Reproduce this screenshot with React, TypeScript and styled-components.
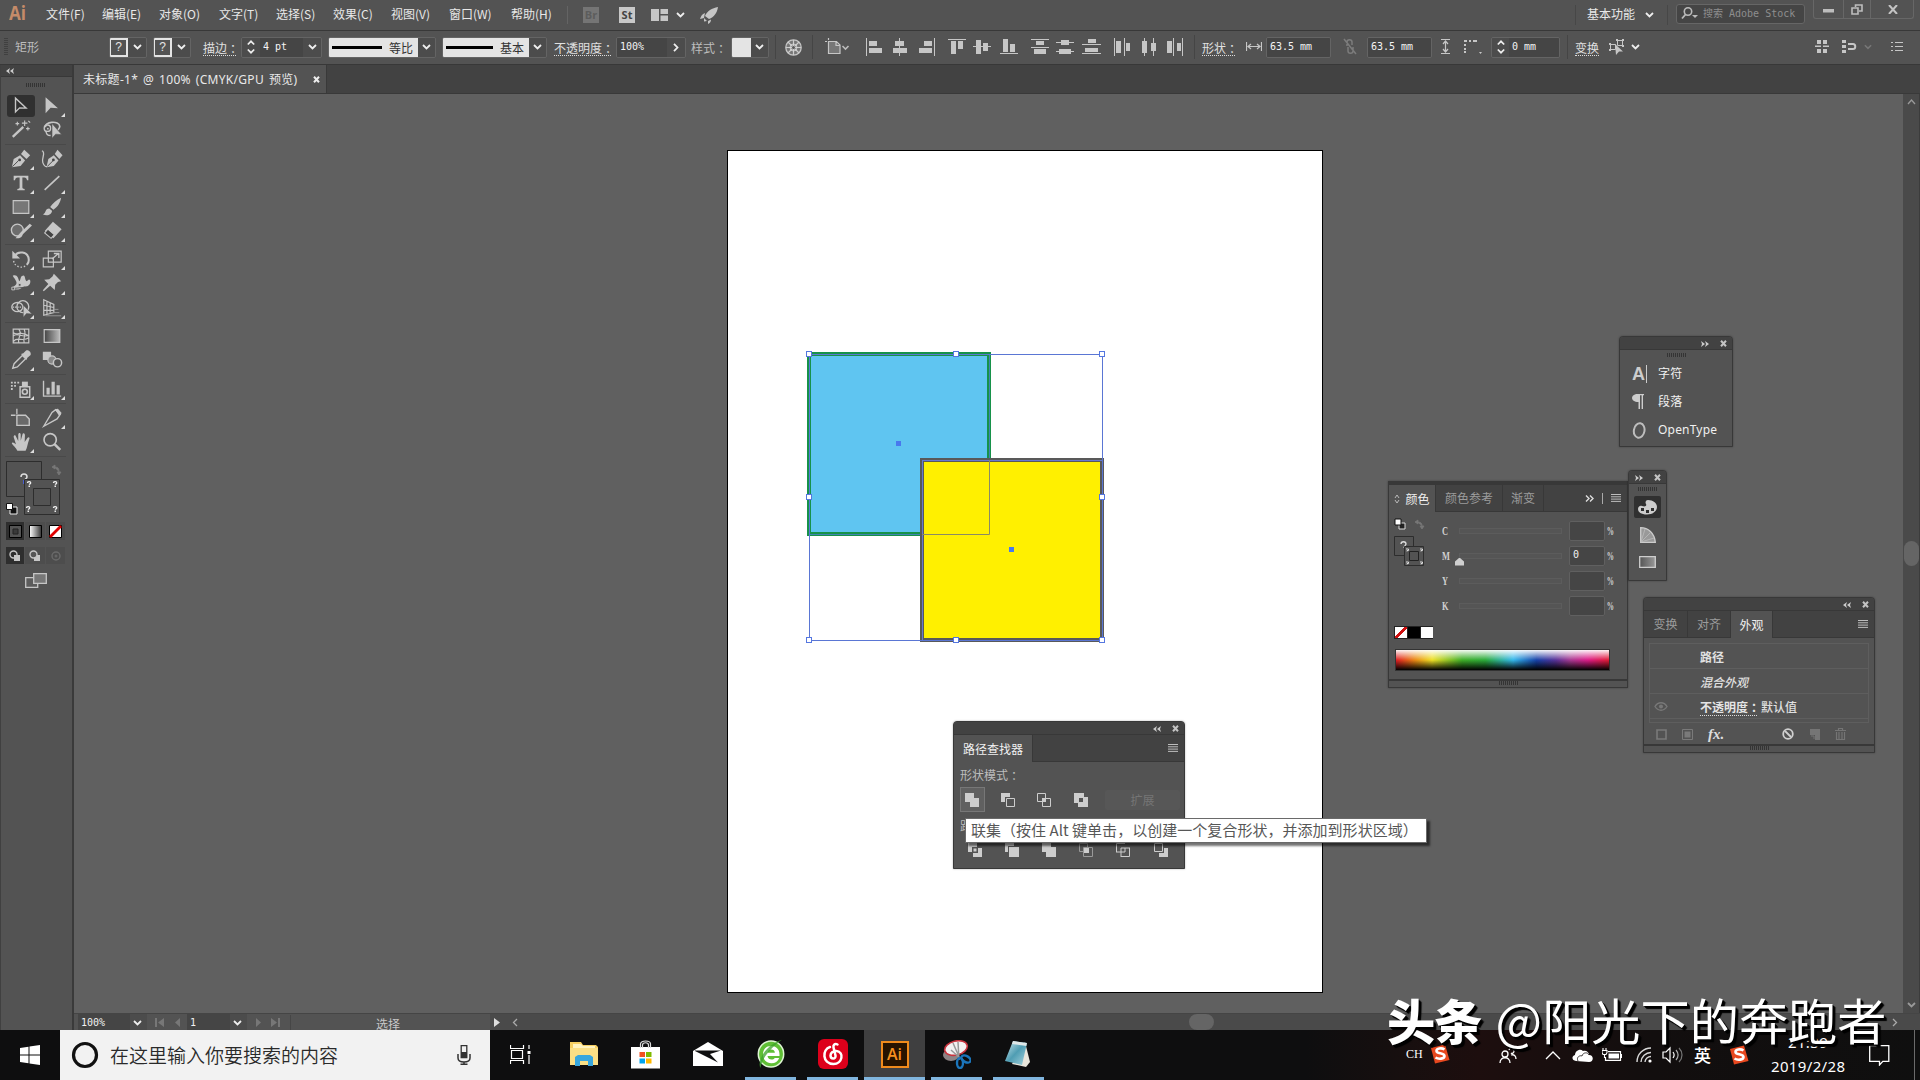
import React from 'react';
import styled, { createGlobalStyle, css } from 'styled-components';

const UI = '"Noto Sans CJK SC", "Noto Sans", sans-serif';
const MONO = '"DejaVu Sans Mono", "Noto Sans CJK SC", monospace';
const C = {
  bar: '#535353', strip: '#424242', canvas: '#606060', line: '#383838',
  field: '#454545', icon: '#c6c6c6', text: '#e6e6e6',
};

const Global = createGlobalStyle`
  *, *::before, *::after { box-sizing: border-box; }
  html, body { margin: 0; padding: 0; background: ${C.bar}; overflow: hidden; }
  svg { display: block; flex: none; }
`;

const Screen = styled.div`
  position: relative; width: 1920px; height: 1080px; overflow: hidden;
  display: grid; grid-template-rows: 31px 34px 965px 50px;
  background: ${C.bar}; color: ${C.text}; font: 12px/16px ${UI}; white-space: nowrap;
`;

/* ---------- shared bits ---------- */
const Cell = styled.div<{ $w: number; $dy?: number }>`
  flex: none; width: ${p => p.$w}px; height: 100%; display: flex; align-items: center;
  padding-top: ${p => p.$dy || 0}px;
`;
const VLine = styled.i<{ $h?: number; $c?: string }>`
  display: block; width: 1px; height: ${p => p.$h || 24}px; background: ${p => p.$c || '#454545'};
`;
const Svg = ({ w, h, vb, children }: { w: number; h: number; vb?: string; children: React.ReactNode }) => (
  <svg width={w} height={h} viewBox={vb || `0 0 ${w} ${h}`} fill="none" stroke="none">{children}</svg>
);
const Chevron = ({ c = '#eee', w = 9 }: { c?: string; w?: number }) => (
  <Svg w={w} h={6} vb="0 0 9 6"><path d="M1 1l3.5 3.5L8 1" stroke={c} strokeWidth="1.8" /></Svg>
);
const DoubleArrow = ({ right }: { right?: boolean }) => (
  <Svg w={8} h={6}>
    <path fill="#ccc" d={right ? 'M0 0l4 3-4 3 1-3zM4 0l4 3-4 3 1-3z' : 'M4 0L0 3l4 3-1-3zM8 0L4 3l4 3-1-3z'} />
  </Svg>
);
const CrossIcon = ({ c = '#c4c4c4' }: { c?: string }) => (
  <Svg w={7} h={7}><path d="M1 .8l5 5.4M6 .8L1 6.2" stroke={c} strokeWidth="2" /></Svg>
);
const MenuLines = () => (
  <Svg w={10} h={8}><path d="M0 .5h10M0 2.8h10M0 5.1h10M0 7.4h10" stroke="#bdbdbd" strokeWidth="1" /></Svg>
);
const Grip = styled.i`
  display: block; width: 19px; height: 4px;
  background: repeating-linear-gradient(90deg, #343434 0 1px, transparent 1px 2px);
`;

/* ---------- menu bar ---------- */
const MenuBar = styled.header`
  display: flex; background: ${C.bar}; border-bottom: 1px solid ${C.line}; padding-left: 9px; height: 31px;
`;
const AiMark = styled.span`
  font: bold 19px/22px "Open Sans", sans-serif; color: #c58b69; transform: scaleX(.9); transform-origin: left; padding-bottom: 4px;
`;
const MenuText = styled.span` font: 12px/16px ${UI}; color: #e8e8e8; padding-bottom: 2px; `;
const AppBadge = styled.span<{ $off?: boolean }>`
  width: 16px; height: 16px; background: ${p => (p.$off ? '#757575' : '#c8c8c8')}; color: ${p => (p.$off ? '#5c5c5c' : '#444')};
  font: bold 11px/16px "Open Sans", sans-serif; text-align: center;
`;
const StockSearch = styled.div`
  width: 129px; height: 20px; margin-bottom: 3px; background: ${C.field}; border: 1px solid #666; border-radius: 3px;
  display: flex; align-items: center; gap: 5px; padding-left: 4px; color: #8e8e8e; font: 10px/14px ${MONO};
`;
const WinButtons = styled.div`
  display: grid; grid-template-columns: 29px 27px 44px; height: 19px; align-self: flex-start;
  border: 1px solid #676767; border-top: 0; border-radius: 0 0 3px 3px; width: 101px;
`;
const WinBtn = styled.span`
  display: grid; place-items: center; border-left: 1px solid #676767; &:first-child { border-left: 0; }
`;

const menus: [string, number][] = [
  ['文件(F)', 56], ['编辑(E)', 57], ['对象(O)', 60], ['文字(T)', 57], ['选择(S)', 57],
  ['效果(C)', 58], ['视图(V)', 58], ['窗口(W)', 62], ['帮助(H)', 56],
];

const Menu = () => (
  <MenuBar>
    <Cell $w={37}><AiMark>Ai</AiMark></Cell>
    {menus.map(([t, w]) => <Cell key={t} $w={w}><MenuText>{t}</MenuText></Cell>)}
    <Cell $w={16}><VLine $h={18} $c="#646464" /></Cell>
    <Cell $w={36}><AppBadge $off>Br</AppBadge></Cell>
    <Cell $w={32}><AppBadge>St</AppBadge></Cell>
    <Cell $w={25}><Svg w={17} h={12}><path fill={C.icon} d="M0 0h8v12H0zM9.500 0H17v5H9.500zM9.500 6.500H17V12H9.500z" /></Svg></Cell>
    <Cell $w={24}><Chevron /></Cell>
    <Cell $w={875}>
      <Svg w={18} h={17}><path fill={C.icon} d="M18 0C12 1 7 4 5 9l4 3c5-2 8-6 9-12zM5 6C2 7 1 9 0 12l4-1zM11 12.500l-3 1.500v3c2-1 3-2.500 3-4.500zM4 11l3 3-3 .5z" /></Svg>
    </Cell>
    <Cell $w={12}><VLine $h={20} $c="#474747" /></Cell>
    <Cell $w={58}><MenuText>基本功能</MenuText></Cell>
    <Cell $w={22}><Chevron /></Cell>
    <Cell $w={9}><VLine $h={20} $c="#474747" /></Cell>
    <Cell $w={137}>
      <StockSearch>
        <Svg w={17} h={13}><circle cx="7" cy="4.500" r="3.700" stroke="#bbb" strokeWidth="1.600" /><path d="M4.500 7.500L1 11.500" stroke="#bbb" strokeWidth="1.800" /><path d="M11 8h6l-3 3z" fill="#bbb" /></Svg>
        搜索 Adobe Stock
      </StockSearch>
    </Cell>
    <WinButtons>
      <WinBtn><Svg w={11} h={8}><path fill="#bdbdbd" d="M0 4h11v3.500H0z" /></Svg></WinBtn>
      <WinBtn><Svg w={12} h={11}><path d="M4.500 3V1h6.500v6H8M1 4h6v6H1z" stroke="#bdbdbd" strokeWidth="1.600" /></Svg></WinBtn>
      <WinBtn><Svg w={10} h={9}><path d="M1 0l8 9M9 0L1 9" stroke="#c4c4c4" strokeWidth="2" /></Svg></WinBtn>
    </WinButtons>
  </MenuBar>
);

/* ---------- control bar ---------- */
const ControlBar = styled.div`
  display: flex; height: 34px; padding: 0 0 2px 4px; background: ${C.bar}; border-bottom: 1px solid ${C.line};
`;
const SideGrip = styled.i`
  display: block; width: 4px; height: 18px; background: repeating-linear-gradient(180deg, #404040 0 1px, transparent 1px 2px);
`;
const Frame = styled.div<{ $w: number }>`
  display: flex; align-items: stretch; width: ${p => p.$w}px; height: 21px; border: 1px solid #646464; border-radius: 2px; overflow: hidden;
`;
const QBox = styled.span`
  width: 19px; margin-left: -1px; border: 2px solid #e4e4e4; color: #e4e4e4; font: 12px/15px "Liberation Sans", sans-serif; text-align: center;
`;
const Drop = styled.span<{ $w?: number }>`
  ${p => (p.$w ? css`width: ${p.$w}px;` : css`flex: 1;`)} display: grid; place-items: center; background: #4c4c4c;
`;
const Field = styled.span`
  flex: 1; background: ${C.field}; color: #f4f4f4; font: 10px/18px ${MONO}; padding-left: 3px;
`;
const White = styled.span<{ $w: number }>`
  width: ${p => p.$w}px; background: #e4e4e4; color: #333; display: flex; align-items: center; justify-content: space-between; padding: 1px 5px 0 3px;
`;
const Rule = styled.i<{ $w: number }>` display: block; width: ${p => p.$w}px; height: 3px; background: #000; `;
const Label = styled.span<{ $u?: boolean; $c?: string }>`
  color: ${p => p.$c || '#e0e0e0'}; line-height: 15px; ${p => p.$u && css`border-bottom: 1px dotted #ddd;`}
`;
const Tight = styled.span` font-feature-settings: "halt"; margin-left: 3px; `;
const Spin = () => (
  <Svg w={8} h={14}><path d="M.8 4.500L4 1.300l3.200 3.200M.8 9.500L4 12.700l3.200-3.200" stroke="#eee" strokeWidth="1.700" /></Svg>
);

type Shape = { r: number[][]; w: number; n: number };
const aligns: Shape[] = [
  { n: 27, w: 16, r: [[0, 0, 1, 18], [3, 3, 8, 5], [3, 10, 13, 5]] },
  { n: 26, w: 14, r: [[6, 0, 1, 18], [2, 3, 9, 5], [0, 10, 14, 5]] },
  { n: 29, w: 16, r: [[15, 0, 1, 18], [5, 3, 8, 5], [0, 10, 13, 5]] },
  { n: 25, w: 18, r: [[0, 1, 18, 1], [3, 3, 5, 13], [10, 3, 5, 8]] },
  { n: 27, w: 18, r: [[0, 8, 18, 1], [3, 2, 5, 14], [10, 5, 5, 8]] },
  { n: 31, w: 18, r: [[0, 15, 18, 1], [3, 1, 5, 13], [10, 6, 5, 8]] },
  { n: 25, w: 18, r: [[0, 1, 18, 1], [5, 3, 8, 4], [0, 9, 18, 1], [3, 11, 12, 5]] },
  { n: 26, w: 18, r: [[0, 4, 18, 1], [5, 2, 8, 5], [0, 13, 18, 1], [3, 11, 12, 5]] },
  { n: 32, w: 19, r: [[0, 6, 19, 1], [6, 1, 8, 4], [0, 15, 19, 1], [3, 10, 13, 4]] },
  { n: 27, w: 17, r: [[0, 0, 1, 18], [2, 3, 5, 12], [10, 0, 1, 18], [12, 5, 4, 8]] },
  { n: 25, w: 17, r: [[3, 0, 1, 18], [1, 3, 5, 12], [12, 0, 1, 18], [10, 5, 5, 8]] },
  { n: 28, w: 17, r: [[7, 0, 1, 18], [1, 3, 5, 12], [16, 0, 1, 18], [11, 5, 4, 8]] },
];

const Controls = () => (
  <ControlBar>
    <Cell $w={11}><SideGrip /></Cell>
    <Cell $w={94}><Label $c="#bdbdbd">矩形</Label></Cell>
    <Cell $w={44} $dy={1}><Frame $w={38}><QBox>?</QBox><Drop><Chevron /></Drop></Frame></Cell>
    <Cell $w={50} $dy={1}><Frame $w={38}><QBox>?</QBox><Drop><Chevron /></Drop></Frame></Cell>
    <Cell $w={38} $dy={2}><Label $u>描边<Tight>：</Tight></Label></Cell>
    <Cell $w={87} $dy={1}><Frame $w={81}><Drop $w={18}><Spin /></Drop><Field>4 pt</Field><Drop $w={18}><Chevron /></Drop></Frame></Cell>
    <Cell $w={114} $dy={1}><Frame $w={108}><White $w={89}><Rule $w={50} />等比</White><Drop><Chevron /></Drop></Frame></Cell>
    <Cell $w={112} $dy={1}><Frame $w={105}><White $w={86}><Rule $w={47} />基本</White><Drop><Chevron /></Drop></Frame></Cell>
    <Cell $w={62} $dy={2}><Label $u>不透明度<Tight>：</Tight></Label></Cell>
    <Cell $w={75} $dy={1}><Frame $w={70}><Field>100%</Field><Drop $w={18}><Svg w={6} h={9}><path d="M1 .8l3.500 3.700L1 8.200" stroke="#eee" strokeWidth="1.800" /></Svg></Drop></Frame></Cell>
    <Cell $w={40} $dy={2}><Label $c="#bdbdbd">样式<Tight>：</Tight></Label></Cell>
    <Cell $w={44} $dy={1}><Frame $w={38}><White $w={19} /><Drop><Chevron /></Drop></Frame></Cell>
    <Cell $w={10}><VLine /></Cell>
    <Cell $w={27} $dy={1}>
      <Svg w={17} h={17}><circle cx="8.500" cy="8.500" r="7.700" fill="#777" stroke="#c6c6c6" strokeWidth="1.300" /><path d="M8.500 1v15M1 8.500h15M3 3l11 11M14 3L3 14" stroke="#ccc" strokeWidth="1.200" /><circle cx="8.500" cy="8.500" r="3.500" stroke="#ddd" strokeWidth=".8" /><circle cx="8.500" cy="8.500" r="1.500" fill="#555" /></Svg>
    </Cell>
    <Cell $w={13}><VLine /></Cell>
    <Cell $w={41} $dy={1}>
      <Svg w={25} h={18}><path d="M4 4h7l4 4v7H4z" fill="#777" /><path d="M3.500 3.500h8l3.500 3.500v8.500H3.500zM0 3.500h2M3.500 0v2M11 4v3.500h4" stroke={C.icon} strokeWidth="1.200" /><path d="M17.500 8l3 3 3-3" stroke="#bbb" strokeWidth="1.600" /></Svg>
    </Cell>
    {aligns.map((a, i) => (
      <Cell key={i} $w={a.n} $dy={1}><Svg w={a.w} h={18}>{a.r.map(([x, y, w, h], k) => <rect key={k} x={x} y={y} width={w} height={h} fill={C.icon} />)}</Svg></Cell>
    ))}
    <Cell $w={8}><VLine /></Cell>
    <Cell $w={44} $dy={2}><Label $u>形状<Tight>：</Tight></Label></Cell>
    <Cell $w={20}><Svg w={16} h={9}><path d="M.5 0v9M15.500 0v9M2 4.500h12M5 2L2 4.500 5 7M11 2l3 2.500L11 7" stroke={C.icon} strokeWidth="1.200" /></Svg></Cell>
    <Cell $w={77} $dy={1}><Frame $w={65}><Field>63.5 mm</Field></Frame></Cell>
    <Cell $w={24}><Svg w={14} h={17}><path d="M4 8V4c0-3 5-3 5 0v3M5 9v4c0 3 5 3 5 0V9M1 1l12 15" stroke="#7c7c7c" strokeWidth="1.500" /></Svg></Cell>
    <Cell $w={74} $dy={1}><Frame $w={65}><Field>63.5 mm</Field></Frame></Cell>
    <Cell $w={23}><Svg w={9} h={15}><path d="M0 .5h9M0 14.500h9M4.500 2v11M2 5l2.500-3L7 5M2 10l2.500 3L7 10" stroke={C.icon} strokeWidth="1.200" /></Svg></Cell>
    <Cell $w={27}><Svg w={18} h={14}><path fill={C.icon} d="M0 0h3v2H0zM5 0h2v2H5zM9 0h4v2H9zM0 4h2v2H0zM0 8h2v2H0zM0 11h2v2H0zM15 12h3l-1.500 2z" /></Svg></Cell>
    <Cell $w={76} $dy={1}><Frame $w={69}><Drop $w={17}><Spin /></Drop><Field>0 mm</Field></Frame></Cell>
    <Cell $w={8}><VLine /></Cell>
    <Cell $w={33} $dy={2}><Label $u>变换</Label></Cell>
    <Cell $w={23}><Svg w={18} h={17}><path d="M9.500 2.500h5v5h-5zM2.500 6.500h5v5h-5z" stroke={C.icon} /><path d="M8 1h2v2H8zM14 1h2v2h-2zM14 7h2v2h-2zM1 5h2v2H1zM1 11h2v2H1zM7 6l8 7.500h-4L8 17z" fill={C.icon} /></Svg></Cell>
    <Cell $w={184}><Chevron /></Cell>
    <Cell $w={27}><Svg w={14} h={13}><path fill={C.icon} d="M2 0h4v4H2zM8 0h4v4H8zM2 9h4v4H2zM8 9h4v4H8zM0 5.500h6v1.500H0zM8 5.500h6v1.500H8z" /></Svg></Cell>
    <Cell $w={22}><Svg w={15} h={14}><path d="M0 0h4v3H0zM0 5h4v3H0zM0 10h4v3H0z" fill={C.icon} /><path d="M6 4h5c3 0 3 5 0 5H6" stroke={C.icon} strokeWidth="2" /></Svg></Cell>
    <Cell $w={27}><Chevron c="#777" w={8} /></Cell>
    <Cell $w={12}><Svg w={12} h={9}><path d="M0 .5h2M4 .5h8M0 4.500h2M4 4.500h8M0 8.500h2M4 8.500h8" stroke={C.icon} strokeWidth="1.200" /></Svg></Cell>
  </ControlBar>
);

/* ---------- left toolbar ---------- */
const Work = styled.main` display: grid; grid-template-columns: 74px 1fr; height: 965px; `;
const Tools = styled.aside` border-left: 1px solid #404040; border-right: 2px solid #3a3a3a; background: ${C.bar}; width: 74px; `;
const ToolsHead = styled.div` height: 12px; background: ${C.strip}; padding: 3px 0 0 5px; border-bottom: 1px solid ${C.line}; `;
const GripRow = styled.div` height: 16px; display: flex; justify-content: center; align-items: center; padding-right: 2px; `;
const ToolGroup = styled.div<{ $rh: number; $pt: number; $pb: number }>`
  display: grid; grid-template-columns: 31px 31px; grid-auto-rows: ${p => p.$rh}px; margin: 0 6px 0 4px;
  padding: ${p => p.$pt}px 0 ${p => p.$pb}px; border-bottom: 1px solid #494949;
`;
const ToolCell = styled.span<{ $on?: boolean; $sub?: boolean }>`
  position: relative; display: grid; place-items: center; border-radius: 3px;
  ${p => p.$on && css`background: #303030; margin: 1px 1px 1px 2px;`}
  ${p => p.$sub && css`&::after { content: ''; position: absolute; right: 2px; bottom: 1px; border: 2px solid transparent; border-right-color: #ddd; border-bottom-color: #ddd; }`}
`;
const I = C.icon;
const tool: Record<string, React.ReactNode> = {
  select: <path d="M6 3.500v15l4.500-4.500 7 .3z" stroke={I} strokeWidth="1.500" />,
  direct: <path d="M5 2.500v17.500l5.500-6 8 .5z" fill={I} />,
  wand: <><path d="M3 19.500L14.500 8.500" stroke={I} strokeWidth="2.600" /><path d="M16 1.500v6M13 4.500h6M8 3v4M6 5h4M19.500 8.500v4M17.500 10.500h4M20 2l2 2" stroke={I} strokeWidth="1.200" /></>,
  lasso: <><path d="M5 9C3 3 20 1 20.500 8c0 2-1 3-2 4" stroke={I} strokeWidth="1.800" /><circle cx="7" cy="10" r="3.500" stroke={I} strokeWidth="1.500" /><circle cx="7.500" cy="10.500" r="1" fill={I} /><path d="M5.500 13c0 4 2 5 5 5" stroke={I} strokeWidth="1.500" /><path d="M12 5v16l4-4.500 6.500 .5z" fill={I} stroke="#535353" strokeWidth=".6" /></>,
  pen: <><path d="M2 21l2-9 7-4 5.500 5.500-5 6z" fill={I} /><path d="M12 6.500l3.500-4.500 6.500 6-4 4z" fill={I} /><path d="M2.500 20.500l7-7" stroke="#444" /><circle cx="10.500" cy="13" r="1.500" fill="#444" /></>,
  curve: <><path d="M6 21l2-9 6-4 5 5.500-5 6z" fill={I} /><path d="M15 6.500l3-4.500 5.500 6-3.500 4z" fill={I} /><path d="M6.500 20.500l7-7" stroke="#444" /><circle cx="13.500" cy="13" r="1.500" fill="#444" /><path d="M1 3c5 2-1 8 1 13 1 3 3 5 5 4" stroke={I} strokeWidth="1.400" /></>,
  type: <path d="M4 4h16v5h-1.500c-.3-2-1-3-3-3h-2v11c0 1 .8 1.500 2.500 1.500V20H8v-1.500c1.700 0 2.500-.5 2.500-1.500V6h-2c-2 0-2.700 1-3 3H4z" fill={I} />,
  line: <path d="M4 19.500L20 4.500" stroke={I} strokeWidth="1.800" />,
  rect: <path d="M3.500 5h17v14h-17z" fill="#777" stroke={I} strokeWidth="1.300" />,
  brush: <path d="M22 2c-5 2-9 6-12 10l3.500 3c5-3 7.500-8 8.500-13zM9 13.500c-5 0-3 5-7 6.500 5 2.500 10 0 10-4z" fill={I} />,
  blob: <><circle cx="8" cy="11" r="6.500" fill="#6c6c6c" stroke={I} strokeWidth="1.500" /><path d="M24 6L14 15.500c-1 3.500-3 4.500-8 4.500l6-7L21.500 4z" fill={I} /></>,
  eraser: <><path d="M13 2l9.500 8-9 10-9.500-8z" fill={I} /><path d="M7.500 10l7 6-3.500 4-7-6z" fill="#444" stroke={I} strokeWidth="1.200" /></>,
  rotate: <><path d="M5 9C8 3 20 3 20.500 13c0 2-1 4-2 5" stroke={I} strokeWidth="2.200" /><path d="M2.500 3v8.500H11z" fill={I} /><path d="M4 14c1 8 12 9 15.500 3" stroke={I} strokeWidth="1.500" strokeDasharray="1.600 2" /></>,
  scale: <><path d="M8 3.500h14v12H8zM2.500 11h11v9.500h-11z" stroke={I} strokeWidth="1.300" /><path d="M12 12l7-6M14 6h5.500v5" stroke={I} strokeWidth="1.400" /></>,
  warp: <><path d="M3 4c5-2 6 3 7 6 2-1 1-6 4-6 3-1 2 5 4 6 2 0 2-3 4-1 1 4-2 7-5 7-3-1-5 3-8 3-3 1-5-2-7 0 1-4 6-4 5-8-1-3-3-5-4-7z" fill={I} /><path d="M3 18L22 16" stroke="#535353" /><path d="M2 16.500h3v3H2z" fill="#535353" stroke={I} /><path d="M9 12.500h3v3H9z" fill="#535353" stroke={I} /></>,
  pin: <path d="M14 2l8 8-3.500 1-3 3-.5 5.500-5-4.500-7 6-1-1 6-7-4.500-4.500 5.500-.5 3.500-3z" fill={I} />,
  builder: <><ellipse cx="8" cy="11" rx="6" ry="5" stroke={I} strokeWidth="1.500" /><ellipse cx="14" cy="10.500" rx="6.500" ry="6.500" stroke={I} strokeWidth="1.500" /><path d="M3 11h11" stroke={I} strokeWidth="1.200" strokeDasharray="1.500 1" /><path d="M14.500 9v13l3.500-4 6 .5z" fill={I} stroke="#535353" strokeWidth=".5" /></>,
  persp: <><path d="M3 3l11 5v9L3 20zM6.500 4.500v14M10 6v12M3 9l11 2.500M3 14.500h11" stroke={I} strokeWidth="1.300" /><path d="M14 13.500h5M5 20.500h17M10 17h10" stroke="#999" /></>,
  mesh: <path d="M3.500 4.500h17v15h-17zM3.500 12c5-5 10 3 17-1M9.500 4.500c5 6-2 9 0 15M15.500 4.500c3 6-2 9 0 15M3.500 8c4 5 8-3 17 4M3.500 18c5-6 10 1 17-4" stroke={I} strokeWidth="1.300" />,
  grad: <path d="M3.500 5h17v14h-17z" fill="url(#tg)" stroke={I} strokeWidth="1.300" />,
  dropper: <><path d="M3 21l1.500-5 9-9 3.500 3.500-9 9z" stroke={I} strokeWidth="1.500" /><path d="M12 5.500l2.500-1 3-3c3-1 6 2 5 5l-3.500 3-1 2.500z" fill={I} /></>,
  blend: <><path d="M2 3h9v9H2z" fill={I} /><circle cx="12" cy="12" r="4.500" fill="#888" stroke={I} strokeWidth="1.300" /><circle cx="18" cy="15" r="4.500" fill="#535353" stroke={I} strokeWidth="1.600" /></>,
  spray: <><path d="M11 9.500h10.500v11.500H11z" stroke={I} strokeWidth="1.600" /><path d="M13 4h6.500v5H13z" fill={I} /><circle cx="16.200" cy="15" r="2.700" stroke={I} strokeWidth="1.800" /><path d="M1 4h2v2H1zM4.500 4h2v2h-2zM8 4h2v2H8zM1 7.500h2v2H1zM4.500 7.500h2v2h-2zM1 11h2v2H1z" fill={I} /></>,
  graph: <path d="M2 3h1.500v16H22v1.500H2zM6 10.500h3.500V18H6zM11.500 4H15v14h-3.500zM17 8h3.500v10H17z" fill={I} />,
  artb: <><path d="M7.500 9h9.500l4 4v7H7.500z" fill="#6a6a6a" stroke={I} strokeWidth="1.500" /><path d="M1 9h5M7.500 2v5.500" stroke={I} strokeWidth="1.400" /></>,
  slice: <><path d="M3 21l9-15 4-3 5 5-3.500 5z" stroke={I} strokeWidth="1.500" /><path d="M15 2.500l3.500-.5 4 4.500-2.500 3.500z" fill={I} /></>,
  hand: <path d="M8 21.500c-1-3-5-6-6-8 0-2 2.500-1 4.500 1L4 6.500C4 4 6 4 6.500 6L9 11V4c0-2.500 2.700-2.500 2.700 0v6.500L13.500 4c.5-2.500 2.800-2 2.800.5L16 12l3-4.500c1.200-1.500 3-.5 2 1.500-2 5-2 9-4 12.500z" fill={I} />,
  zoom: <><circle cx="10" cy="9.500" r="6.700" stroke={I} strokeWidth="1.800" /><path d="M15 14.500l6 6" stroke={I} strokeWidth="2.800" /></>,
};
const groups: { rh: number; pt: number; pb: number; items: string[] }[] = [
  { rh: 24.5, pt: 0.5, pb: 1, items: ['select*', 'direct.', 'wand', 'lasso'] },
  { rh: 24, pt: 2, pb: 1, items: ['pen.', 'curve', 'type.', 'line.', 'rect.', 'brush.', 'blob.', 'eraser.'] },
  { rh: 24.5, pt: 2, pb: 2, items: ['rotate.', 'scale.', 'warp.', 'pin.', 'builder.', 'persp.'] },
  { rh: 24, pt: 1, pb: 2, items: ['mesh', 'grad', 'dropper.', 'blend'] },
  { rh: 24, pt: 2, pb: 2, items: ['spray.', 'graph.'] },
  { rh: 24, pt: 2, pb: 2, items: ['artb', 'slice.', 'hand.', 'zoom'] },
];
const FillArea = styled.div` display: flex; padding: 4px 0 0 5px; height: 64px; `;
const ModeRow = styled.div<{ $h: number; $mt: number }>`
  display: grid; grid-template-columns: 18px 20px 19px; height: ${p => p.$h}px; margin: ${p => p.$mt}px 0 0 5px; gap: 1px;
`;
const Mode = styled.span<{ $on?: boolean }>` display: grid; place-items: center; background: ${p => (p.$on ? '#2e2e2e' : '#4d4d4d')}; `;
const ScreenMode = styled.div` display: flex; justify-content: center; margin: 9px 1px 0 0; `;

const Toolbar = () => (
  <Tools>
    <ToolsHead><DoubleArrow /></ToolsHead>
    <GripRow><Grip /></GripRow>
    {groups.map((g, i) => (
      <ToolGroup key={i} $rh={g.rh} $pt={g.pt} $pb={g.pb}>
        {g.items.map(n => (
          <ToolCell key={n} $on={n.endsWith('*')} $sub={n.endsWith('.')}>
            <Svg w={22} h={22} vb="0 0 24 24">
              <defs><linearGradient id="tg"><stop offset="0" stopColor="#444" /><stop offset="1" stopColor="#bbb" /></linearGradient></defs>
              {tool[n.replace(/[*.]/, '')]}
            </Svg>
          </ToolCell>
        ))}
      </ToolGroup>
    ))}
    <FillArea>
      <Svg w={56} h={54}>
        <path d="M.5.5h35v35H.5z" fill="#535353" stroke="#2d2d2d" />
        <path d="M15 16c0-4 6-4 6 0 0 2-3 2-3 5" stroke="#ddd" strokeWidth="1.500" /><path d="M17.500 19v4" stroke="#4a5fd0" />
        <path d="M18.500 18.500h35v35h-35z" fill="#535353" stroke="#2d2d2d" />
        <path d="M27.500 27.500h17v17h-17z" stroke="#2d2d2d" />
        {[[23, 22], [49, 22], [22, 47], [49, 47]].map(([x, y]) => <g key={`${x}-${y}`}><path d={`M${x - 1.5} ${y}c0-2 4-2 3 .5l-1.500 1`} stroke="#eee" strokeWidth="1.300" /><path d={`M${x - 0.5} ${y + 2.5}h1.500v1.500h-1.500z`} fill="#eee" /></g>)}
        <path d="M46 6l3-2v4zM48 6c4 0 5 1 5 5M51 11h4l-2 3z" stroke="#777" fill="#777" strokeWidth=".8" />
      </Svg>
    </FillArea>
    <ModeRow $h={0} $mt={-18}>
      <Svg w={12} h={12}><path d="M4 4h7v7H4z" fill="#111" stroke="#eee" /><path d="M.5.5h6v6h-6z" fill="#fff" stroke="#111" /></Svg>
    </ModeRow>
    <ModeRow $h={18} $mt={19}>
      <Mode $on><Svg w={13} h={13}><path d="M.5.5h12v12H.5z" fill="#555" stroke="#000" /><path d="M4 4h5v5H4z" fill="#3a3a3a" stroke="#222" /></Svg></Mode>
      <Mode><Svg w={13} h={13}><defs><linearGradient id="mg"><stop offset="0" stopColor="#fff" /><stop offset="1" stopColor="#333" /></linearGradient></defs><path d="M.5.5h12v12H.5z" fill="url(#mg)" stroke="#000" /></Svg></Mode>
      <Mode><Svg w={13} h={13}><path d="M.5.500h12v12H.5z" fill="#fff" stroke="#000" /><path d="M1 12L12 1" stroke="#e00000" strokeWidth="2.800" /></Svg></Mode>
    </ModeRow>
    <ModeRow $h={17} $mt={7}>
      <Mode $on><Svg w={12} h={12}><circle cx="4.500" cy="4.500" r="3.500" stroke={I} strokeWidth="1.400" /><path d="M5 5h6v6H5z" fill={I} /></Svg></Mode>
      <Mode><Svg w={12} h={12}><path d="M5 5h6v6H5z" fill={I} /><circle cx="4.500" cy="4.500" r="3.500" fill="#555" stroke={I} strokeWidth="1.400" /></Svg></Mode>
      <Mode><Svg w={12} h={12}><circle cx="6" cy="6" r="4" stroke="#6a6a6a" strokeWidth="1.400" /><circle cx="6" cy="6" r="1.500" fill="#666" /></Svg></Mode>
    </ModeRow>
    <ScreenMode><Svg w={22} h={16}><path d="M.7 4.700h12v9.600H.7z" fill="#5c5c5c" stroke={I} strokeWidth="1.300" /><path d="M8.700.7h12.600v9.600H8.700z" fill="#777" stroke={I} strokeWidth="1.300" /></Svg></ScreenMode>
  </Tools>
);

/* ---------- document ---------- */
const Doc = styled.section` display: grid; grid-template-rows: 29px 919px 17px; min-width: 0; `;
const Tabs = styled.div` display: flex; background: ${C.strip}; border-bottom: 1px solid #393939; `;
const DocTab = styled.div`
  width: 253px; background: ${C.bar}; display: flex; align-items: center; padding: 1px 6px 0 9px; justify-content: space-between;
  border-right: 1px solid #393939; color: #e8e8e8; font: 12px/16px "Noto Sans", ${UI}; letter-spacing: .3px; word-spacing: 1.500px;
`;
const CanvasRow = styled.div` display: grid; grid-template-columns: 1829px 17px; `;
const Pasteboard = styled.div` position: relative; background: ${C.canvas}; overflow: hidden; `;
const Artboard = styled.div`
  position: absolute; left: 653px; top: 56px; width: 596px; height: 843px; background: #fff; border: 1px solid #000;
`;
const Sheet = styled.svg` position: absolute; left: 0; top: 0; `;
const VScroll = styled.div`
  background: #4a4a4a; display: flex; flex-direction: column; align-items: center; justify-content: space-between; padding: 5px 1px; border-right: 1px solid #3c3c3c;
`;
const Thumb = styled.i<{ $w: number; $h: number }>`
  display: block; width: ${p => p.$w}px; height: ${p => p.$h}px; border-radius: 9px; background: #656565;
`;
const Status = styled.div` display: flex; background: #4a4a4a; border-top: 1px solid #454545; height: 17px; `;
const StatusLeft = styled.div` display: flex; width: 416px; background: ${C.bar}; padding-left: 4px; `;
const SField = styled.span<{ $w: number }>`
  width: ${p => p.$w}px; height: 100%; background: ${C.field}; color: #f2f2f2; font: 10px/17px ${MONO}; padding-left: 3px;
`;
const SDrop = styled.span` width: 17px; height: 100%; display: grid; place-items: center; background: #4c4c4c; padding: 2px 3px 0 0; `;

const Canvas = () => {
  const handles = [[735, 260], [882, 260], [1028, 260], [735, 403], [1028, 403], [735, 546], [882, 546], [1028, 546]];
  return (
    <Pasteboard>
      <Artboard />
      <Sheet width={1829} height={919} fill="none">
        <rect x="735" y="260" width="180" height="180" fill="#5fc5f1" stroke="#17924a" strokeWidth="4" />
        <rect x="735.500" y="260.500" width="180" height="180" stroke="#3f83b4" />
        <rect x="848" y="366" width="180" height="180" fill="#fff000" stroke="#595959" strokeWidth="4" />
        <rect x="848.500" y="366.500" width="180" height="180" stroke="#6878d0" />
        <path d="M915.500 366v74.500H848" stroke="#8a8a66" />
        <rect x="735.500" y="260.500" width="293" height="286" stroke="#5a76d4" />
        <path d="M822 347h5v5h-5zM935 453h5v5h-5z" fill="#4879ee" />
        {handles.map(([x, y]) => <rect key={`${x}.${y}`} x={x - 2.5} y={y - 2.5} width="5" height="5" fill="#fff" stroke="#5577e0" />)}
      </Sheet>
    </Pasteboard>
  );
};

/* ---------- floating panels ---------- */
const Panel = styled.div<{ $x: number; $y: number; $w: number; $h: number; $sq?: boolean }>`
  position: absolute; left: ${p => p.$x}px; top: ${p => p.$y}px; width: ${p => p.$w}px; height: ${p => p.$h}px;
  display: flex; flex-direction: column; background: ${C.bar}; border: 1px solid ${C.line};
  border-radius: ${p => (p.$sq ? '0' : '4px 4px 0 0')}; box-shadow: 0 0 2px rgba(0,0,0,.35); overflow: hidden;
`;
const PHead = styled.div`
  flex: none; height: 13px; background: ${C.strip}; border-bottom: 1px solid ${C.line}; display: flex; align-items: center; justify-content: flex-end; gap: 11px; padding: 1px 5px 0 0;
`;
const TopEdge = styled.div` flex: none; height: 3px; background: #383838; `;
const PTabs = styled.div` flex: none; height: 27px; display: flex; background: ${C.strip}; border-bottom: 1px solid ${C.line}; `;
const PTab = styled.span<{ $w: number; $on?: boolean }>`
  width: ${p => p.$w}px; display: flex; align-items: center; justify-content: center; gap: 5px; border-right: 1px solid ${C.line};
  ${p => (p.$on ? css`background: ${C.bar}; color: #f0f0f0; margin-bottom: -1px;` : css`color: #9c9c9c;`)}
`;
const PTail = styled.span<{ $pr: number }>` flex: 1; display: flex; align-items: center; justify-content: flex-end; gap: 8px; padding-right: ${p => p.$pr}px; `;
const GripFoot = styled.div` flex: none; margin-top: auto; height: 8px; border-top: 2px solid ${C.line}; display: flex; justify-content: center; `;

/* pathfinder */
const PfBody = styled.div` padding: 5px 4px 0 6px; color: #c4c4c4; display: flex; flex-direction: column; align-items: flex-start; `;
const PfRow = styled.div` display: flex; align-items: center; margin-top: 5px; height: 25px; `;
const PfBtn = styled.span<{ $w: number; $on?: boolean }>`
  width: ${p => p.$w}px; height: 25px; display: flex; align-items: center; padding-left: 5px;
  ${p => p.$on && css`background: #606060; outline: 1px solid #777; outline-offset: -1px; margin-right: 11px;`}
`;
const Expand = styled.span` width: 75px; height: 20px; background: #575757; border-radius: 2px; color: #757575; text-align: center; line-height: 20px; `;
const PfRow2 = styled.div` display: flex; margin: 10px 0 0 8px; `;
const PfSub = styled.span` margin-top: 6px; line-height: 15px; color: #bcbcbc; `;
const Tip = styled.div`
  position: absolute; left: 965px; top: 818px; width: 462px; height: 25px; background: #fff; border: 1px solid #6a6a6a; color: #575757;
  font: 15px/22px ${UI}; letter-spacing: .03px; padding-left: 5px; box-shadow: 3px 3px 2px rgba(0,0,0,.55);
`;
const L = '#cdcdcd';
const pf1 = [
  <path key="a" d="M0 0h9v5h5v9H5V9H0z" fill={L} />,
  <g key="b"><path d="M0 0h9v4H4v5H0z" fill={L} /><path d="M5.500 5.500h8v8h-8z" stroke={L} /></g>,
  <g key="c"><path d="M.5.5h8v8h-8zM5.500 5.500h8v8h-8z" stroke={L} /><path d="M5 5h4v4H5z" fill={L} /></g>,
  <path key="d" fillRule="evenodd" d="M0 0h10v4h4v10H4v-4H0zM5 5v4h4V5z" fill={L} />,
];
const pf2 = [
  <g key="a"><path d="M0 0h9v4H4v5H0zM10 5h4v9H5v-4h5z" fill={L} /><path d="M5.500 5.500h3v3h-3z" fill={L} /></g>,
  <g key="b"><path d="M0 0h9v3H3v6H0z" fill={L} /><path d="M4 4h10v10H4z" fill={L} /></g>,
  <path key="c" d="M0 0h9v4h5v10H4V9H0z" fill={L} />,
  <g key="d"><path d="M.5.5h8v8h-8zM4.500 4.500h9v9h-9z" stroke="#999" /><path d="M5 5h5v5H5z" fill={L} /></g>,
  <g key="e"><path d="M.5 9V.5H9M13.500 5v8.500H5M5 5v4h4V5zM9 5h5M5 9v5M0 9h5" stroke={L} /></g>,
  <g key="f"><path d="M.5.500h8v8h-8z" stroke={L} /><path d="M10 5h4v9H5v-4h5z" fill={L} /></g>,
];
const Pathfinder = () => (
  <Panel $x={953} $y={721} $w={232} $h={148}>
    <PHead><DoubleArrow /><CrossIcon /></PHead>
    <PTabs><PTab $w={79} $on>路径查找器</PTab><PTail $pr={6}><MenuLines /></PTail></PTabs>
    <PfBody>
      <Label $c="#bcbcbc">形状模式<Tight>：</Tight></Label>
      <PfRow>
        <PfBtn $w={25} $on><Svg w={14} h={14}>{pf1[0]}</Svg></PfBtn>
        <PfBtn $w={36}><Svg w={14} h={14}>{pf1[1]}</Svg></PfBtn>
        <PfBtn $w={37}><Svg w={14} h={14}>{pf1[2]}</Svg></PfBtn>
        <PfBtn $w={36}><Svg w={14} h={14}>{pf1[3]}</Svg></PfBtn>
        <Expand>扩展</Expand>
      </PfRow>
      <PfSub>路</PfSub>
      <PfRow2>{pf2.map((p, i) => <Cell key={i} $w={i > 3 ? 38 : 37}><Svg w={14} h={14}>{p}</Svg></Cell>)}</PfRow2>
    </PfBody>
  </Panel>
);

/* colour */
const ColorBody = styled.div` display: grid; grid-template-columns: 46px 1fr; padding: 6px 0 0 5px; height: 112px; `;
const Sliders = styled.div` display: grid; grid-auto-rows: 25px; `;
const SliderRow = styled.div` display: grid; grid-template-columns: 19px 103px 7px 36px 14px; align-items: center; color: #d0d0d0; `;
const Track = styled.i` display: block; height: 6px; border: 1px solid #5c5c5c; background: #555; position: relative; `;
const Knob = styled.i`
  position: absolute; left: -5px; top: 4px; width: 9px; height: 8px; background: #cfcfcf; clip-path: polygon(50% 0, 100% 50%, 100% 100%, 0 100%, 0 50%);
`;
const NumBox = styled.span` height: 20px; background: ${C.field}; border: 1px solid #606060; border-radius: 2px; color: #f2f2f2; font: 10px/16px ${MONO}; padding-left: 3px; `;
const Narrow = styled.span` font: bold 12px/14px "Liberation Serif", serif; transform: scaleX(.6); transform-origin: left; padding-left: 3px; `;
const Letter = styled.span` font: bold 12px/14px "Liberation Serif", serif; transform: scaleX(.7); transform-origin: 0; padding-left: 3px; `;
const Swatches = styled.div` display: grid; grid-template-columns: repeat(3, 13px); width: 39px; height: 13px; margin: 2px 0 0 5px; `;
const Sw = styled.i<{ $b: string }>` display: block; background: ${p => p.$b}; border: 1px solid #222; border-right: 0; `;
const Spectrum = styled.div`
  width: 215px; height: 22px; margin: 10px 0 0 6px; border: 1px solid #333;
  background: linear-gradient(180deg, rgba(255,255,255,.95) 0, rgba(255,255,255,0) 50%, rgba(0,0,0,0) 50%, #000 100%),
    linear-gradient(90deg, #e01c24, #ea8a14 9%, #eee026 17%, #3fae28 31%, #2cab3c 42%, #35b8ec 55%, #1742a8 66%, #5a3398 75%, #a83a92 82%, #dc1c88 90%, #e01c34);
`;
const ColorPanel = () => (
  <Panel $x={1388} $y={481} $w={240} $h={207} $sq>
    <TopEdge />
    <PTabs>
      <PTab $w={47} $on><Svg w={6} h={10}><path d="M1 4l2-3 2 3M1 6l2 3 2-3" stroke="#bbb" /></Svg>颜色</PTab>
      <PTab $w={67}>颜色参考</PTab><PTab $w={41}>渐变</PTab>
      <PTail $pr={6}><Svg w={9} h={7}><path d="M1 .5l3 3-3 3M5 .5l3 3-3 3" stroke="#ddd" strokeWidth="1.400" /></Svg><VLine $h={11} $c="#aaa" /><MenuLines /></PTail>
    </PTabs>
    <ColorBody>
      <Svg w={34} h={50}>
        <path d="M5 5h6v6H5z" fill="#222" stroke="#ddd" /><path d="M1 1h6v6H1z" fill="#fff" stroke="#111" />
        <path d="M21 4l3-2v4zM23 4c4 0 5 1 5 4M26 8h4l-2 3z" stroke="#777" fill="#777" strokeWidth=".8" />
        <path d="M.5 18.500h19v19H.5z" stroke="#2d2d2d" /><path d="M7 26c0-3 5-3 5 0 0 1-2 2-2 4" stroke="#ddd" strokeWidth="1.300" />
        <path d="M10.500 28.500h19v19h-19z" fill="#535353" stroke="#2d2d2d" /><path d="M15.500 33.500h9v9h-9z" stroke="#222" />
        {[[12, 31], [26, 31], [12, 44], [26, 44]].map(([x, y]) => <path key={`${x}${y}`} d={`M${x} ${y}h2.500v1.500H${x + 1}v1`} stroke="#ddd" />)}
      </Svg>
      <Sliders>
        {['C', 'M', 'Y', 'K'].map(k => (
          <SliderRow key={k}><Letter>{k}</Letter><Track>{k === 'M' && <Knob />}</Track><i /><NumBox>{k === 'M' ? '0' : ''}</NumBox><Narrow>%</Narrow></SliderRow>
        ))}
      </Sliders>
    </ColorBody>
    <Swatches><Sw $b="linear-gradient(135deg,#fff 43%,#d01010 43% 57%,#fff 57%)" /><Sw $b="#000" /><Sw $b="#fff" /></Swatches>
    <Spectrum />
    <GripFoot><Grip /></GripFoot>
  </Panel>
);

/* icon dock */
const DockBody = styled.div` display: flex; flex-direction: column; align-items: center; padding-top: 3px; `;
const DockItem = styled.span<{ $on?: boolean; $h: number }>`
  width: 27px; height: ${p => p.$h}px; display: grid; place-items: center; ${p => p.$on && css`background: #303030; margin-top: 5px; border-radius: 2px;`}
`;
const Dock = () => (
  <Panel $x={1628} $y={470} $w={39} $h={111}>
    <PHead><DoubleArrow right /><CrossIcon /></PHead>
    <DockBody>
      <Grip />
      <DockItem $on $h={22}><Svg w={19} h={15}><path fillRule="evenodd" fill={L} d="M10 0c5 0 9 3 9 7s-4 7.500-10 7.500S0 12 0 9c0-2 2-4 4-3 3 1 5 0 4-2-1-1-.5-4 2-4zM3 8v3h3V8zM8 10v3h3v-3zM13 8v3h3V8z" /></Svg></DockItem>
      <DockItem $h={34}><Svg w={16} h={16}><path d="M.7.700C8 .7 14.500 6 15.300 15.300H.7z" fill="#999" stroke={L} strokeWidth="1.300" /><path d="M1 15L5 2M1 15l9-9M1 15l13-4" stroke="#bbb" strokeWidth=".8" /></Svg></DockItem>
      <DockItem $h={20}><Svg w={17} h={12}><defs><linearGradient id="dg"><stop offset="0" stopColor="#555" /><stop offset="1" stopColor="#999" /></linearGradient></defs><path d="M.7.7h15.600v10.600H.7z" fill="url(#dg)" stroke={L} strokeWidth="1.300" /></Svg></DockItem>
    </DockBody>
  </Panel>
);

/* type dock */
const TypeRows = styled.div` width: 100%; padding-top: 3px; `;
const TypeRow = styled.div` display: grid; grid-template-columns: 26px 1fr; align-items: center; height: 28px; padding-left: 12px; color: #f0f0f0; font: 12px/18px "Noto Sans", ${UI}; letter-spacing: .2px; `;
const Glyph = styled.span<{ $f: string }>` font: ${p => p.$f}; color: ${L}; display: flex; align-items: center; gap: 1px; `;
const TypeDock = () => (
  <Panel $x={1619} $y={336} $w={114} $h={111}>
    <PHead><DoubleArrow right /><CrossIcon /></PHead>
    <DockBody>
      <Grip />
      <TypeRows>
        <TypeRow><Glyph $f={'bold 18px/20px "Liberation Sans", sans-serif'}>A<VLine $h={18} $c="#ccc" /></Glyph>字符</TypeRow>
        <TypeRow><Svg w={13} h={16}><path d="M6 0h6v1.200h-1V15H9.600V1.200H8V15H6.500V8C-2 8-2 0 6 0z" fill={L} /></Svg>段落</TypeRow>
        <TypeRow><Svg w={15} h={17}><ellipse cx="7.200" cy="8.500" rx="5.300" ry="7.300" transform="rotate(10 7.200 8.500)" stroke="#bdbdbd" strokeWidth="2" /></Svg>OpenType</TypeRow>
      </TypeRows>
    </DockBody>
  </Panel>
);

/* appearance */
const List = styled.div` margin: 5px 5px 0 5px; border: 1px solid #5e5e5e; height: 80px; `;
const ListRow = styled.div<{ $i?: boolean }>`
  display: grid; grid-template-columns: 25px 25px 1fr; height: 25px; align-items: center; border-bottom: 1px solid #5e5e5e; color: #e0e0e0;
  font-weight: 700; padding-top: 1px; ${p => p.$i && css`font-style: italic; font-weight: 500;`}
`;
const Value = styled.span` margin-left: 4px; font-weight: 500; `;
const FootIcons = styled.div` display: flex; height: 21px; padding: 1px 0 0 12px; `;
const Fx = styled.span` font: italic bold 15px/16px "Liberation Serif", serif; color: #ddd; `;
const Appearance = () => (
  <Panel $x={1643} $y={597} $w={232} $h={156}>
    <PHead><DoubleArrow /><CrossIcon /></PHead>
    <PTabs><PTab $w={44}>变换</PTab><PTab $w={43}>对齐</PTab><PTab $w={42} $on>外观</PTab><PTail $pr={6}><MenuLines /></PTail></PTabs>
    <List>
      <ListRow><i /><i /><span>路径</span></ListRow>
      <ListRow $i><i /><i /><span>混合外观</span></ListRow>
      <ListRow>
        <Cell $w={24}><Svg w={18} h={9}><path d="M5 4.500c3-5 9-5 12 0-3 5-9 5-12 0z" stroke="#787878" strokeWidth="1.400" /><circle cx="11" cy="4.500" r="2" fill="#787878" /></Svg><Cell $w={6} /><VLine $h={23} $c="#3a3a3a" /></Cell>
        <i /><span><Label $u $c="#e4e4e4">不透明度<Tight>：</Tight></Label><Value>默认值</Value></span>
      </ListRow>
    </List>
    <FootIcons>
      <Cell $w={26}><Svg w={11} h={11}><path d="M1 1h9v9H1z" stroke="#7a7a7a" strokeWidth="1.600" /></Svg></Cell>
      <Cell $w={26}><Svg w={11} h={11}><path d="M.5.5h10v10H.5z" stroke="#7a7a7a" /><path d="M2.500 2.500h6v6h-6z" fill="#7a7a7a" /></Svg></Cell>
      <Cell $w={74}><Fx>fx.</Fx></Cell>
      <Cell $w={28}><Svg w={12} h={12}><circle cx="6" cy="6" r="4.800" stroke="#d0d0d0" strokeWidth="1.800" /><path d="M3 3l6 6" stroke="#d0d0d0" strokeWidth="1.800" /></Svg></Cell>
      <Cell $w={25}><Svg w={10} h={11}><path d="M0 0h10v11H5V6H0z" fill="#757575" /><path d="M1 7h3v3" stroke="#757575" /></Svg></Cell>
      <Cell $w={12}><Svg w={11} h={12}><path d="M0 2.500h11M3.500 2V.5h4V2M1.500 4v7.500h8V4M4 4v7M7 4v7" stroke="#757575" strokeWidth="1.200" /></Svg></Cell>
    </FootIcons>
    <GripFoot><Grip /></GripFoot>
  </Panel>
);

/* ---------- taskbar ---------- */
const Taskbar = styled.footer`
  display: flex; height: 50px; color: #fff;
  background: linear-gradient(90deg, #0e0e0f 0 68%, #170f0f 73%, #1d0e0e 77%, #120e0e 86%, #0f0f0f 100%);
`;
const Start = styled.div` width: 60px; display: grid; place-items: center; `;
const SearchBox = styled.div`
  width: 430px; background: #f2f2f2; color: #3a3a3a; display: flex; align-items: center; padding: 0 19px 0 11px; font: 19px/26px ${UI};
`;
const SearchHint = styled.span` margin-left: 11px; flex: 1; font-weight: 350; color: #2a2a2a; `;
const TaskItem = styled.div<{ $w: number; $run?: boolean; $on?: boolean; $ml?: number }>`
  width: ${p => p.$w}px; margin-left: ${p => p.$ml || 0}px; display: grid; place-items: center; border-bottom: 3px solid ${p => (p.$run ? '#80b5de' : 'transparent')};
  ${p => p.$on && css`background: #3f3f40;`} padding-top: 1px;
`;
const AiTile = styled.span`
  width: 28px; height: 27px; border: 2px solid #ef8a1c; background: #261300; color: #f5901e; font: 600 16px/22px "Open Sans", sans-serif; text-align: center;
`;
const Tray = styled.div` margin-left: 362px; display: flex; `;
const TCell = styled.div<{ $w: number; $up?: number }>` width: ${p => p.$w}px; display: flex; align-items: center; padding-bottom: ${p => p.$up || 0}px; height: 50px; `;
const Lang = styled.span` font: 12px/16px "Liberation Serif", serif; `;
const Ime = styled.span` font: 500 17px/22px ${UI}; color: #fff; `;
const Clock = styled.div` width: 98px; font: 15px/24px "Noto Sans", sans-serif; letter-spacing: .35px; display: flex; flex-direction: column; `;
const Time = styled.span` padding-left: 17px; `;
const Sogou = () => (
  <Svg w={20} h={20}><path d="M1 4L15 0.500 19.500 16 5 19.500z" fill="#e8481f" /><path d="M14.500 5.500c-3-2-8-1-8 1.500 0 3 8 1.500 8 5 0 3-6 3.500-9 1.500" stroke="#fff" strokeWidth="2.600" /></Svg>
);
const Watermark = styled.div`
  position: absolute; left: 1387px; top: 986px; height: 66px; display: flex; align-items: center; color: #fff; font: 49.200px/66px ${UI};
  text-shadow: 3px 3px 1px #000, 2px 2px 0 #000, 1px 1px 0 #111;
`;
const Brand = styled.b` font-weight: 900; font-size: 48.300px; letter-spacing: -1px; margin-right: 14px; `;

const Task = () => (
  <Taskbar>
    <Start><Svg w={20} h={20}><path fill="#fff" d="M0 3l8.500-1.200v7.700H0zM9.500 1.600L20 0v9.500H9.500zM0 10.500h8.500v7.700L0 17zM9.500 10.500H20V20L9.500 18.400z" /></Svg></Start>
    <SearchBox>
      <Svg w={28} h={28}><circle cx="14" cy="14" r="11.500" stroke="#111" strokeWidth="3.200" /></Svg>
      <SearchHint>在这里输入你要搜索的内容</SearchHint>
      <Svg w={14} h={20}><path d="M4.200.7h5.600v12H4.200z" stroke="#333" strokeWidth="1.300" /><path d="M4 7h6v6H4z" fill="#333" /><path d="M1 9v4c0 3 3 4 6 4s6-1 6-4V9M7 17v2M3.500 19.300h7" stroke="#333" strokeWidth="1.500" /></Svg>
    </SearchBox>
    <TaskItem $w={62} $ml={-1}><Svg w={21} h={19}><path d="M.5 0v3.500h13V0M.5 19v-3.500h13V19M1.500 5.500h11v8h-11zM19 0v4M19 10v9" stroke="#fff" strokeWidth="1.200" /><path d="M17.500 6h3v3h-3z" fill="#fff" /></Svg></TaskItem>
    <TaskItem $w={62} $ml={2}><Svg w={28} h={24}><path d="M0 0h11l2 3h13l2 2v18H0z" fill="#f6cf62" /><path d="M3 2h8l2 2h12v5H3z" fill="#fff3c0" /><path d="M0 6h28v17H0z" fill="#fbdf85" /><path d="M5 24v-9l3-2h12l3 2v9h-5v-5h-8v5z" fill="#38a6dd" /></Svg></TaskItem>
    <TaskItem $w={62} $ml={-1}><Svg w={29} h={29}><path d="M0 7h29v21.500H0z" fill="#fff" /><path d="M9.500 8V4c0-4 10-4 10 0v4M11.500 8V5c0-3 6-3 6 0v3" stroke="#ddd" strokeWidth="1.200" /><path d="M8.500 12h5.500v5H8.500z" fill="#f25022" /><path d="M15 12h5.500v5H15z" fill="#7fba00" /><path d="M8.500 18.500h5.500v5H8.500z" fill="#00a4ef" /><path d="M15 18.500h5.500v5H15z" fill="#ffb900" /></Svg></TaskItem>
    <TaskItem $w={62} $ml={1}><Svg w={30} h={24}><path d="M0 9L15 0l15 9v15H0z" fill="#fff" /><path d="M2 8.500h26L17 12l8 8.500L2 9z" fill="#0e0e0f" /></Svg></TaskItem>
    <TaskItem $w={51} $ml={6} $run>
      <Svg w={28} h={30}>
        <ellipse cx="14" cy="15" rx="12.700" ry="13" fill="#5fbf35" stroke="#dff5d4" strokeWidth="1.500" />
        <path fillRule="evenodd" fill="#fff" d="M14 7c5 0 8.500 3 8.500 8.500v1.500H10.500c.3 2.500 2 3.500 4 3.500 1.500 0 2.500-.5 3.200-1.500h4.500c-1.200 3.500-4 5.200-7.800 5.200-5 0-8.400-3.400-8.400-8.600S9.200 7 14 7zm-3.400 6.800h7.300c-.2-2-1.600-3.200-3.600-3.200s-3.400 1.200-3.700 3.200z" />
        <path d="M3.500 29C-.5 23 8 6 25 .8 16 7 5 18 3.500 29z" fill="#3aa22a" opacity=".75" />
      </Svg>
    </TaskItem>
    <TaskItem $w={51} $ml={11} $run><Svg w={30} h={30}><rect width="30" height="30" rx="6" fill="#dd001b" /><path d="M19.500 5.500c-3-1.500-4.500 1-4 3l2 8c.7 4-5 4-5 0 0-3 3-5 6-4.500 8 1 6 13-3 13C4 25 4 10 12 8" stroke="#fff" strokeWidth="2.500" strokeLinecap="round" /></Svg></TaskItem>
    <TaskItem $w={61} $ml={6} $run $on><AiTile>Ai</AiTile></TaskItem>
    <TaskItem $w={51} $ml={6} $run><Svg w={28} h={29}><ellipse cx="8" cy="15" rx="8" ry="6" fill="#8d8385" /><ellipse cx="13" cy="8" rx="11.500" ry="7" transform="rotate(-14 13 8)" fill="#f4f1f2" stroke="#c8343f" strokeWidth="1.600" /><path d="M10 3l7 16M15 2l1 18M8 10l9 8" stroke="#999" strokeWidth="1.500" /><ellipse cx="17" cy="23" rx="3" ry="5" stroke="#1b75bb" strokeWidth="2.400" /><ellipse cx="23" cy="19" rx="5" ry="3" transform="rotate(30 23 19)" stroke="#1b75bb" strokeWidth="2.400" /></Svg></TaskItem>
    <TaskItem $w={51} $ml={11} $run><Svg w={28} h={28}><defs><linearGradient id="np" x1="0" y1="0" x2="1" y2="1"><stop offset="0" stopColor="#cfe8ee" /><stop offset=".5" stopColor="#4f9db3" /><stop offset="1" stopColor="#a8d4de" /></linearGradient></defs><path d="M20 2l5 20-4 5-14-3z" fill="#e8e6dc" /><path d="M8 1l14 2-5 22L0 21z" fill="url(#np)" /><path d="M8 1l14 2-.7 3L7 4z" fill="#dfe7e8" /></Svg></TaskItem>
    <Tray>
      <TCell $w={24} $up={3}><Lang>CH</Lang></TCell>
      <TCell $w={69} $up={3}><Sogou /></TCell>
      <TCell $w={46}><Svg w={18} h={16}><circle cx="6" cy="7" r="3" stroke="#fff" strokeWidth="1.300" /><path d="M1 16c0-7 10-7 10 0M10 3c1-3 5-2 5 1 0 2-2 3-3 2M12 8c3-1 5 1 5 4" stroke="#fff" strokeWidth="1.300" /></Svg></TCell>
      <TCell $w={27}><Svg w={16} h={9}><path d="M1 8l7-7 7 7" stroke="#fff" strokeWidth="1.300" /></Svg></TCell>
      <TCell $w={30}><Svg w={21} h={13}><path d="M4 12C0 12-1 7 3 6c0-4 5-7 8-4 3-1 6 1 6 4 5 0 5 7 0 7z" fill="#fff" /><path d="M6 12c-2-4 2-6 4-5 1-4 6-4 7-1" stroke="#161010" strokeWidth=".8" /></Svg></TCell>
      <TCell $w={34}><Svg w={20} h={14}><path d="M6 3.600h12.500v8.800H3.500V9" stroke="#fff" strokeWidth="1.200" /><path d="M6.500 5.500h10.500v5H6.500z" fill="#fff" /><path d="M1 0v2M4 0v2M0 2.500h5v2l-1 2H1l-1-2zM2.500 6v4" stroke="#fff" strokeWidth="1.100" /><path d="M19.500 6v4" stroke="#fff" /></Svg></TCell>
      <TCell $w={26}><Svg w={16} h={16}><path d="M1 15A14 14 0 0115 1M5 15A10 10 0 0115 5.500M9 15a6 6 0 016-5.500" stroke="#d8d8d8" strokeWidth="1.400" /><circle cx="14" cy="14" r="1.600" fill="#fff" /></Svg></TCell>
      <TCell $w={32}><Svg w={21} h={18}><path d="M1 6h3l4-4v14l-4-4H1z" stroke="#fff" strokeWidth="1.200" /><path d="M11 6c1.500 2 1.500 4 0 6" stroke="#fff" strokeWidth="1.200" /><path d="M14 4c2.500 3 2.500 7 0 10" stroke="#aaa" strokeWidth="1.200" /><path d="M17 2c4 4 4 10 0 14" stroke="#777" strokeWidth="1.200" /></Svg></TCell>
      <TCell $w={35}><Ime>英</Ime></TCell>
      <TCell $w={42} $up={1}><Sogou /></TCell>
      <Clock><Time>21:39</Time><span>2019/2/28</span></Clock>
      <TCell $w={45}><Svg w={21} h={21}><path d="M.7.7h19.100v15.600h-6L10.500 20v-3.700H.7z" stroke="#fff" strokeWidth="1.300" /></Svg></TCell>
      <TCell $w={6}><VLine $h={50} $c="#6a6a6a" /></TCell>
    </Tray>
  </Taskbar>
);

export default function App() {
  return (
    <>
      <Global />
      <Screen>
        <Menu />
        <Controls />
        <Work>
          <Toolbar />
          <Doc>
            <Tabs><DocTab><span>未标题-1* @ 100% (CMYK/GPU 预览)</span><CrossIcon c="#eee" /></DocTab></Tabs>
            <CanvasRow>
              <Canvas />
              <VScroll><Svg w={9} h={6}><path d="M1 5l3.500-4L8 5" stroke="#999" strokeWidth="1.300" /></Svg><Thumb $w={15} $h={25} /><Chevron c="#999" /></VScroll>
            </CanvasRow>
            <Status>
              <StatusLeft>
                <SField $w={52}>100%</SField><SDrop><Chevron /></SDrop>
                <Cell $w={40}><Cell $w={8} /><Svg w={26} h={9}><path d="M1 0v9M0 0h2v9H0zM9 0v9L3 4.500zM25 0v9l-5-4.500z" fill="#777" /></Svg></Cell>
                <SField $w={43}>1</SField><SDrop><Chevron /></SDrop>
                <Cell $w={43}><Cell $w={9} /><Svg w={25} h={9}><path d="M0 0v9l5-4.500zM15 0v9l6-4.500zM22 0h2v9h-2z" fill="#777" /></Svg></Cell>
                <Cell $w={86}><VLine $h={15} $c="#464646" /></Cell>
                <Cell $w={112} $dy={2}><Label $c="#c8c8c8">选择</Label></Cell>
              </StatusLeft>
              <Cell $w={22}><Cell $w={4} /><Svg w={6} h={9}><path d="M0 0v9l6-4.500z" fill="#ddd" /></Svg></Cell>
              <Cell $w={677}><Svg w={6} h={9}><path d="M5 1L1.500 4.500 5 8" stroke="#aaa" strokeWidth="1.300" /></Svg></Cell>
              <Cell $w={703}><Thumb $w={25} $h={16} /></Cell>
              <Cell $w={10}><Svg w={6} h={9}><path d="M1 1l3.500 3.500L1 8" stroke="#aaa" strokeWidth="1.300" /></Svg></Cell>
            </Status>
          </Doc>
        </Work>
        <Task />
        <TypeDock />
        <ColorPanel />
        <Dock />
        <Appearance />
        <Pathfinder />
        <Tip>联集（按住 Alt 键单击，以创建一个复合形状，并添加到形状区域）</Tip>
        <Watermark><Brand>头条</Brand>@阳光下的奔跑者</Watermark>
      </Screen>
    </>
  );
}
